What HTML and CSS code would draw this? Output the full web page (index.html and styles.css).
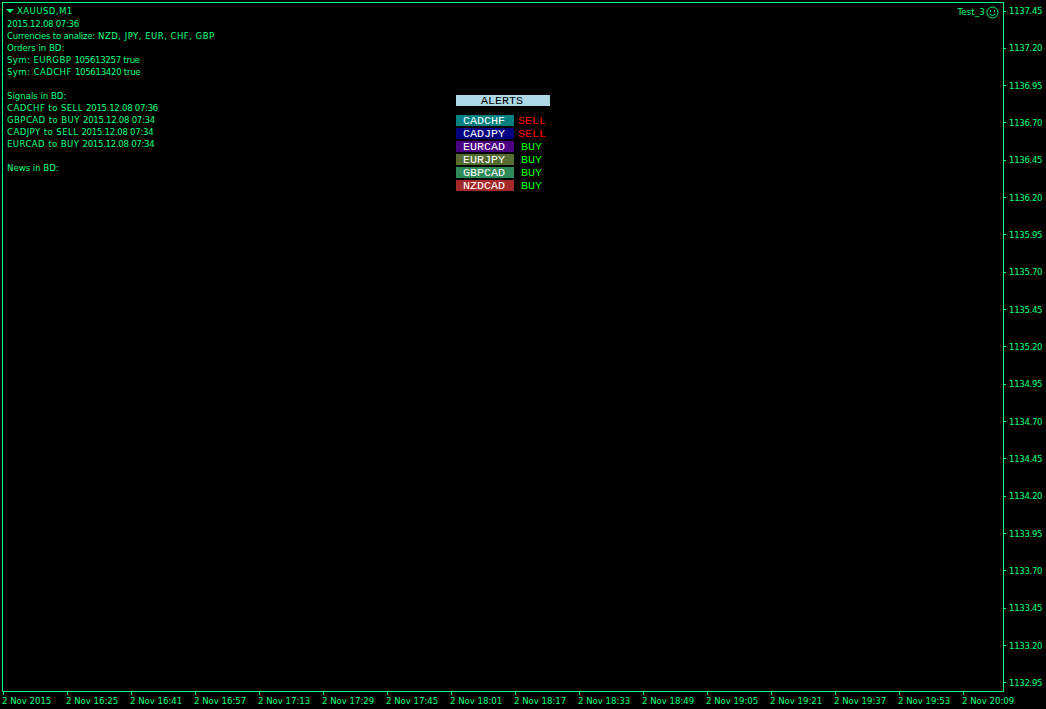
FILE: index.html
```
<!DOCTYPE html>
<html lang="en">

<head>
    <meta charset="UTF-8">
    <meta name="viewport" content="width=device-width, initial-scale=1.0">
    <title>XAUUSD,M1</title>
    <link rel="stylesheet" href="styles.css">
</head>

<body>
    <div class="terminal">
        <main class="chart">
            <section class="comment">
                <div class="symbol">
                    <svg class="arrow" width="8" height="4" viewBox="0 0 8 4"><path d="M0 0H8L4 4Z" /></svg>
                    <span>XAUUSD,M1</span>
                </div>
                <p class="num">2015.12.08 07:36</p>
                <p><span class="label">Currencies to analize:</span> <span class="list">NZD, JPY, EUR, CHF, GBP</span></p>
                <p class="head">Orders in BD:</p>
                <p>Sym: EURGBP <span class="num">105613257 true</span></p>
                <p>Sym: CADCHF <span class="num">105613420 true</span></p>
                <p class="gap head">Signals in BD:</p>
                <p>CADCHF to SELL <span class="num">2015.12.08 07:36</span></p>
                <p>GBPCAD to BUY <span class="num">2015.12.08 07:34</span></p>
                <p>CADJPY to SELL <span class="num">2015.12.08 07:34</span></p>
                <p>EURCAD to BUY <span class="num">2015.12.08 07:34</span></p>
                <p class="gap head">News in BD:</p>
            </section>

            <section class="alerts">
                <h1>ALERTS</h1>
                <div class="alert"><span class="pair teal">CADCHF</span><span class="side sell">SELL</span></div>
                <div class="alert"><span class="pair navy">CADJPY</span><span class="side sell">SELL</span></div>
                <div class="alert"><span class="pair indigo">EURCAD</span><span class="side buy">BUY</span></div>
                <div class="alert"><span class="pair olive">EURJPY</span><span class="side buy">BUY</span></div>
                <div class="alert"><span class="pair green">GBPCAD</span><span class="side buy">BUY</span></div>
                <div class="alert"><span class="pair brown">NZDCAD</span><span class="side buy">BUY</span></div>
            </section>

            <div class="expert">
                <span>Test_3</span>
                <svg width="13" height="13" viewBox="0 0 13 13">
                    <circle cx="6.5" cy="6.5" r="5.5" />
                    <path d="M4.5 4V6M8.5 4V6M3.5 8Q6.5 11 9.5 8" />
                </svg>
            </div>
        </main>

        <aside class="prices">
            <span>1137.45</span>
            <span>1137.20</span>
            <span>1136.95</span>
            <span>1136.70</span>
            <span>1136.45</span>
            <span>1136.20</span>
            <span>1135.95</span>
            <span>1135.70</span>
            <span>1135.45</span>
            <span>1135.20</span>
            <span>1134.95</span>
            <span>1134.70</span>
            <span>1134.45</span>
            <span>1134.20</span>
            <span>1133.95</span>
            <span>1133.70</span>
            <span>1133.45</span>
            <span>1133.20</span>
            <span>1132.95</span>
        </aside>

        <footer class="times">
            <span>2 Nov 2015</span>
            <span>2 Nov 16:25</span>
            <span>2 Nov 16:41</span>
            <span>2 Nov 16:57</span>
            <span>2 Nov 17:13</span>
            <span>2 Nov 17:29</span>
            <span>2 Nov 17:45</span>
            <span>2 Nov 18:01</span>
            <span>2 Nov 18:17</span>
            <span>2 Nov 18:33</span>
            <span>2 Nov 18:49</span>
            <span>2 Nov 19:05</span>
            <span>2 Nov 19:21</span>
            <span>2 Nov 19:37</span>
            <span>2 Nov 19:53</span>
            <span>2 Nov 20:09</span>
        </footer>
    </div>
</body>

</html>
```
FILE: styles.css
```
* {
    box-sizing: border-box;
}

body {
    margin: 0;
    background: #000;
    color: #00ff7f;
    font-family: Tahoma, "DejaVu Sans Condensed", "DejaVu Sans", sans-serif;
    font-size: 9.5px;
    line-height: 12px;
    overflow: hidden;
}

p {
    margin: 0;
}

.terminal {
    display: grid;
    grid-template-columns: 1004px 42px;
    grid-template-rows: 692px 17px;
    width: 1046px;
    height: 709px;
}

.chart {
    display: flex;
    margin: 2px 0 0 2px;
    border: 1px solid #00ff7f;
}

/* left text block */
.comment {
    width: 453px;
    padding: 2px 0 0 4px;
    letter-spacing: 0.42px;
    white-space: nowrap;
}

.symbol {
    display: flex;
    align-items: center;
    gap: 3px;
    height: 13px;
}

.arrow {
    fill: #00ff7f;
    margin: -1px 0 0 -1px;
}

.symbol span {
    margin-top: -1px;
}

.num {
    letter-spacing: -0.27px;
}

.label {
    letter-spacing: -0.22px;
}

.list {
    letter-spacing: 0.47px;
}

.head {
    letter-spacing: 0;
}

.gap {
    margin-top: 12px;
}

/* alerts */
.alerts {
    width: 94px;
    padding-top: 92px;
    font-family: "Courier New", "Liberation Mono", monospace;
    font-size: 11.67px;
    line-height: 11px;
}

.alerts h1 {
    margin: 0 0 9px;
    height: 11px;
    padding: 1px 2px 0 0;
    background: #add8e6;
    color: #000;
    font-size: inherit;
    font-weight: normal;
    text-align: center;
}

.alert {
    display: flex;
    height: 11px;
    margin-bottom: 2px;
}

.pair {
    width: 58px;
    padding: 1px 2px 0 0;
    color: #fff;
    text-align: center;
}

.side {
    width: 36px;
    padding-top: 1px;
    text-align: center;
}

.teal { background: #008080; }
.navy { background: #000080; }
.indigo { background: #4b0082; }
.olive { background: #556b2f; }
.green { background: #2e8b57; }
.brown { background: #a52a2a; }

.sell { color: #f00; }

.buy {
    padding-right: 1px;
    color: #0f0;
}

.expert {
    display: flex;
    gap: 1px;
    height: 13px;
    margin: 3px 4px 0 auto;
    letter-spacing: 0.2px;
}

.expert svg {
    fill: none;
    stroke: #00ff7f;
}

/* scales */
.prices {
    display: flex;
    flex-direction: column;
    justify-content: space-between;
    padding: 5px 0 3px;
    letter-spacing: -0.3px;
}

.prices span {
    display: flex;
    align-items: center;
    gap: 3px;
    height: 12px;
}

.prices span::before {
    content: "";
    width: 2px;
    height: 1px;
    background: #00ff7f;
}

.times {
    display: flex;
    grid-column: 1 / 3;
    padding-left: 2px;
}

.times span {
    flex: 0 0 64px;
    white-space: nowrap;
}

.times span::before {
    content: "";
    display: block;
    width: 1px;
    height: 3px;
    margin-left: 1px;
    background: #00ff7f;
}
```
